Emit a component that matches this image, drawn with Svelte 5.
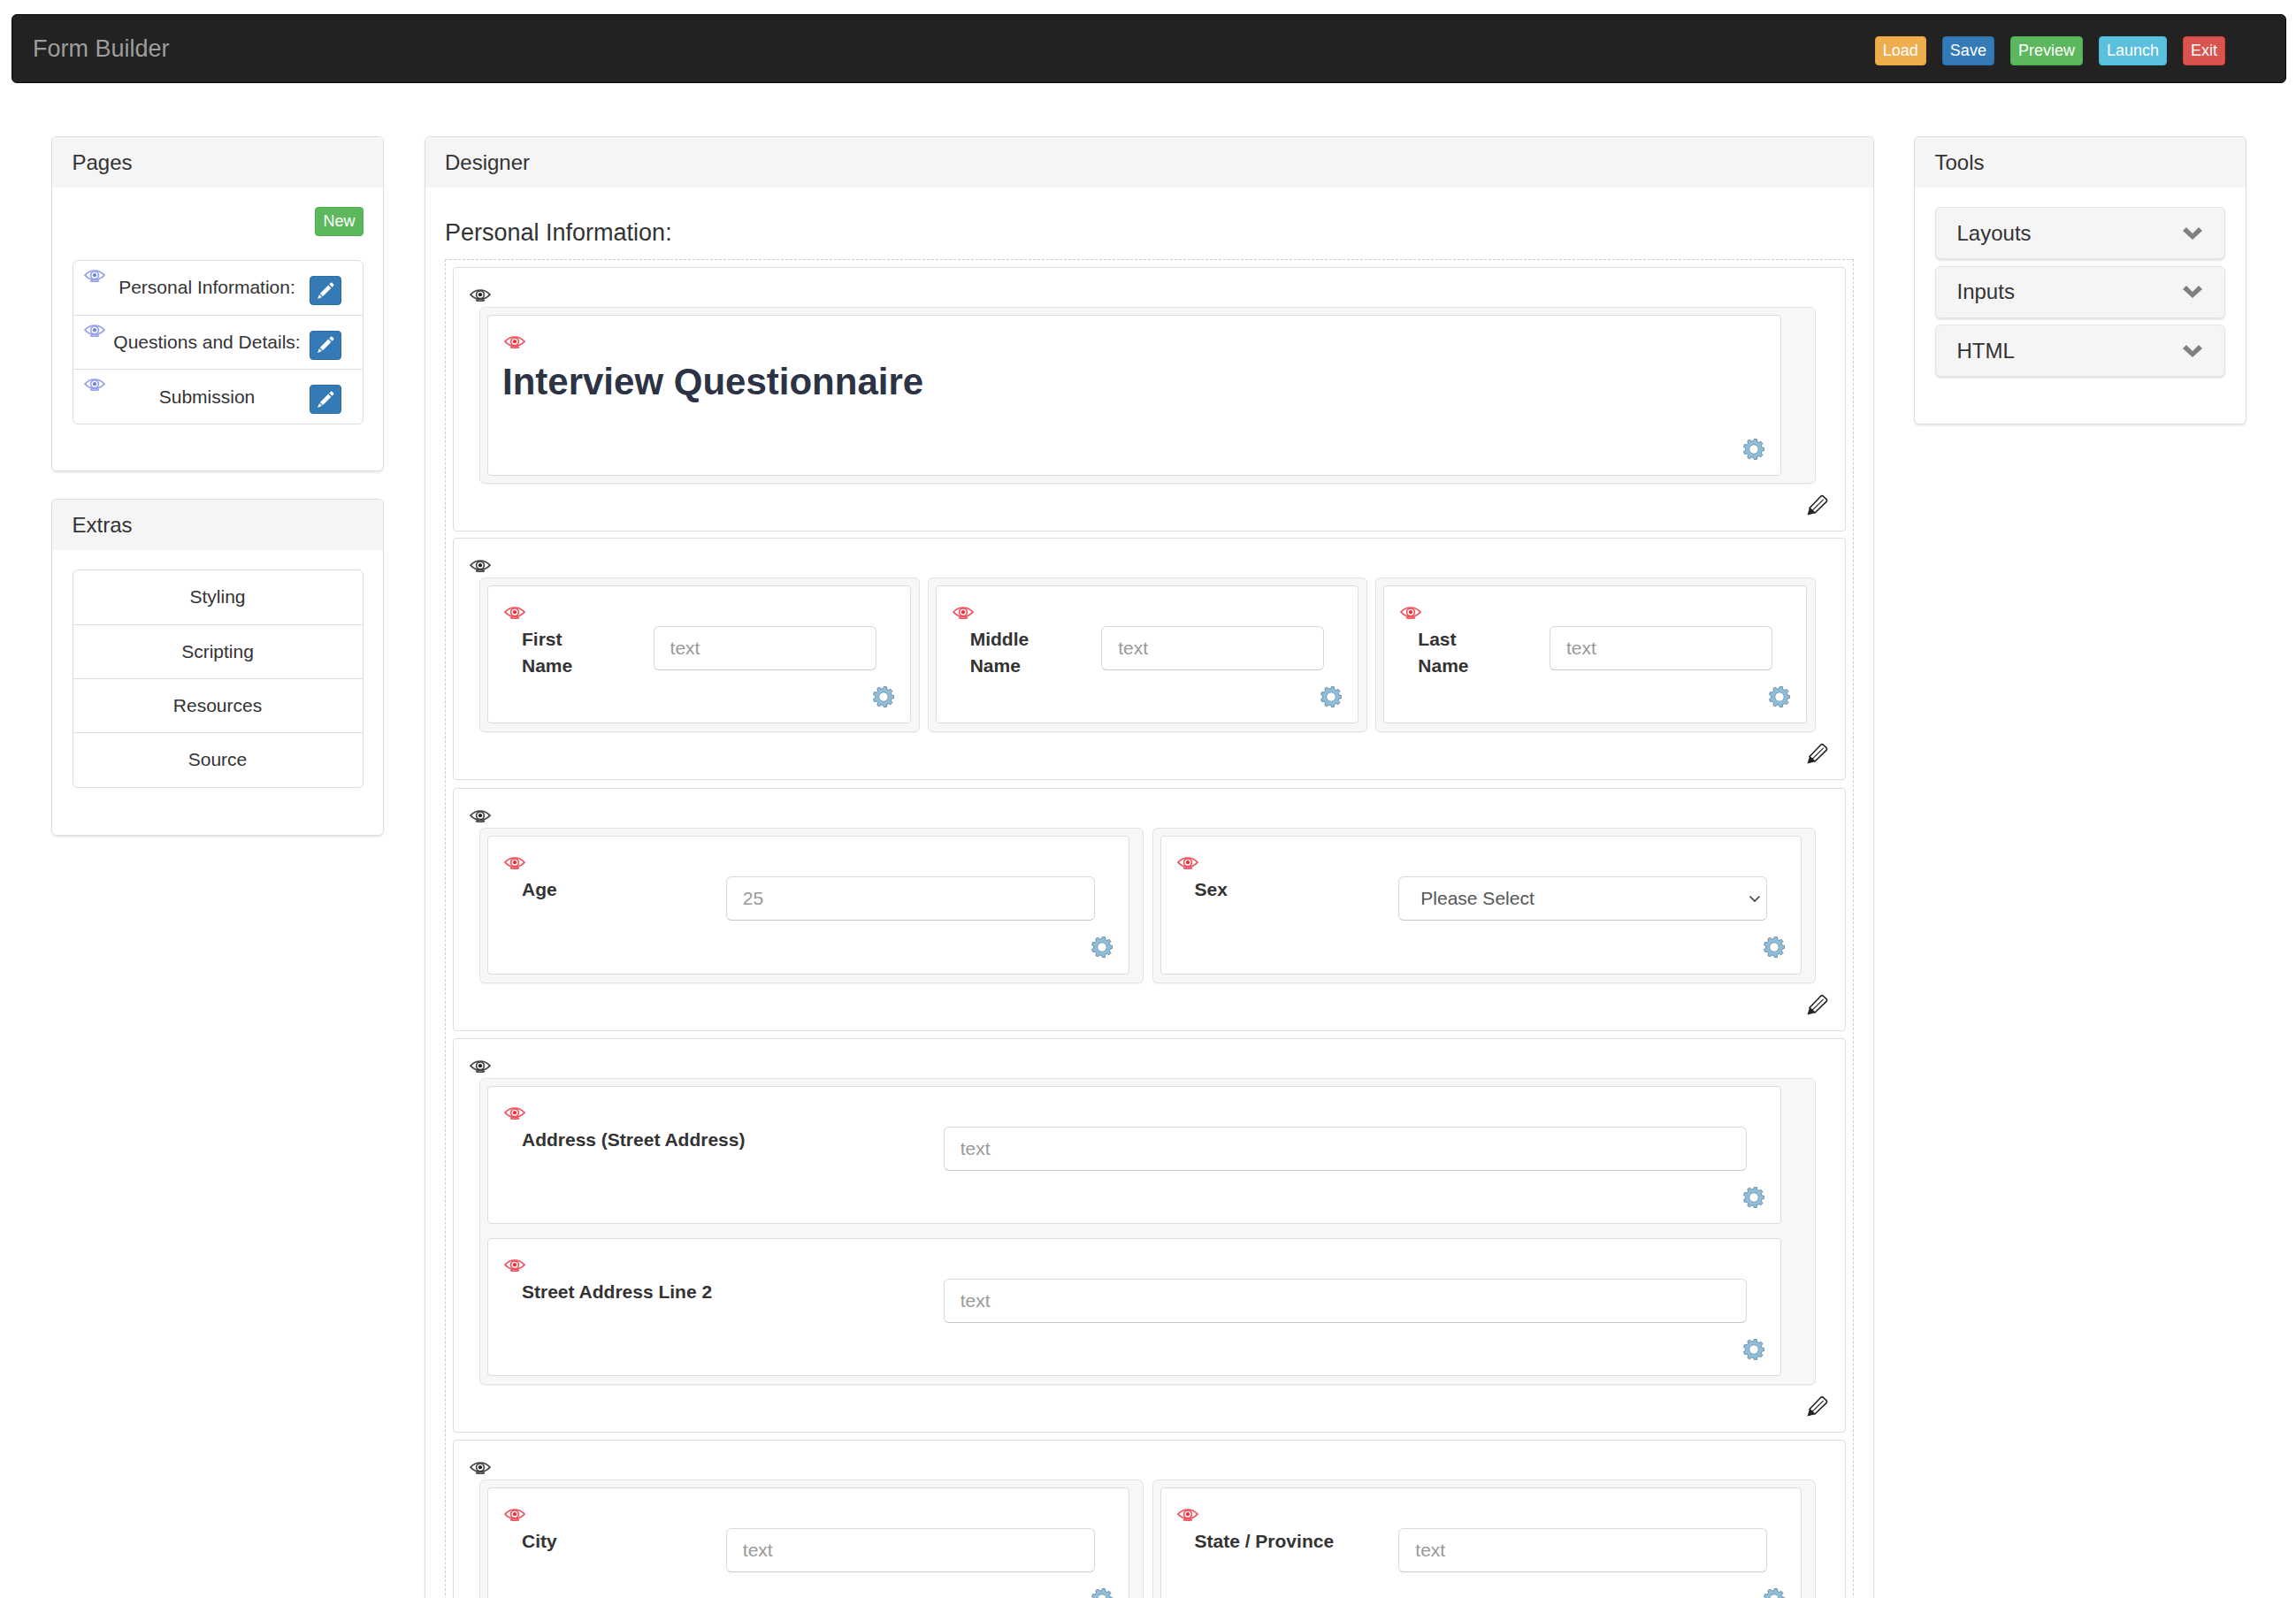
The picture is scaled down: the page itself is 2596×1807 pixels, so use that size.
<script>
  const pages = ['Personal Information:', 'Questions and Details:', 'Submission'];
  const extras = ['Styling', 'Scripting', 'Resources', 'Source'];
  const tools = ['Layouts', 'Inputs', 'HTML'];
  const actions = [
    { label: 'Load', tone: 'warning' },
    { label: 'Save', tone: 'primary' },
    { label: 'Preview', tone: 'success' },
    { label: 'Launch', tone: 'info' },
    { label: 'Exit', tone: 'danger' }
  ];
  const sections = [
    { kind: 'stack', groups: [{ heading: 'Interview Questionnaire' }] },
    { kind: 'three', groups: [
      { label: 'First Name', placeholder: 'text' },
      { label: 'Middle Name', placeholder: 'text' },
      { label: 'Last Name', placeholder: 'text' }
    ] },
    { kind: 'two', groups: [
      { label: 'Age', placeholder: '25' },
      { label: 'Sex', select: 'Please Select' }
    ] },
    { kind: 'stack', groups: [
      { label: 'Address (Street Address)', placeholder: 'text' },
      { label: 'Street Address Line 2', placeholder: 'text' }
    ] },
    { kind: 'two', groups: [
      { label: 'City', placeholder: 'text' },
      { label: 'State / Province', placeholder: 'text' }
    ] }
  ];

  function gearPath() {
    const teeth = 9, cx = 12, cy = 12, ro = 11.8, ri = 9.4;
    let d = '';
    for (let i = 0; i < teeth; i++) {
      const a = (i / teeth) * Math.PI * 2;
      const w = Math.PI / teeth;
      const pts = [
        [ri, a - w * 0.62], [ro, a - w * 0.36], [ro, a + w * 0.36], [ri, a + w * 0.62]
      ];
      for (const [r, t] of pts) {
        d += (d ? 'L' : 'M') + (cx + r * Math.cos(t)).toFixed(2) + ' ' + (cy + r * Math.sin(t)).toFixed(2);
      }
    }
    return d + 'Z';
  }
  const gear = gearPath();
</script>

{#snippet eye(tone)}
  <svg class="eye {tone}" viewBox="0 0 24 14" aria-hidden="true">
    <path class="line" d="M1 6.2C4.5 2.4 8 1 12 1s7.5 1.4 11 5.2C19.5 10 16 11.4 12 11.4S4.5 10 1 6.2Z" />
    <circle class="line" cx="12" cy="6.2" r="4.4" />
    <circle class="dot" cx="12" cy="6.2" r="2.1" />
    <path class="line" d="M7 12.4c3 1.2 7 1.2 10 0" />
  </svg>
{/snippet}

{#snippet cog()}
  <svg class="gear" viewBox="0 0 24 24" aria-hidden="true">
    <path d={gear} fill="#8fbedb" stroke="#6d8da6" stroke-width="1" stroke-linejoin="round" />
    <circle cx="12" cy="12" r="5.2" fill="#fff" stroke="#6d8da6" stroke-width=".8" />
  </svg>
{/snippet}

<div class="page">
  <nav class="navbar">
    <span class="brand">Form Builder</span>
    <div class="actions">
      {#each actions as a}
        <button class="xs {a.tone}">{a.label}</button>
      {/each}
    </div>
  </nav>

  <main class="columns">
    <div class="side">
      <section class="panel">
        <h3 class="head">Pages</h3>
        <div class="body">
          <div class="new-row"><button class="xs success">New</button></div>
          <ul class="list">
            {#each pages as p}
              <li class="item page-item">
                <span class="item-eye">{@render eye('blue')}</span>
                <span class="item-text">{p}</span>
                <button class="edit" aria-label="Edit">
                  <svg viewBox="0 0 20 20" aria-hidden="true">
                    <path d="M13.2 3.6l3.2 3.2L7 16.2 3.8 13z" fill="#fff" />
                    <path d="M14.3 2.5l1.7-1.7q.7-.6 1.4 0l1.8 1.8q.6.7 0 1.4l-1.7 1.7zM3 14l3 3-5 2z" fill="#fff" />
                  </svg>
                </button>
              </li>
            {/each}
          </ul>
        </div>
      </section>

      <section class="panel extras">
        <h3 class="head">Extras</h3>
        <div class="body">
          <ul class="list">
            {#each extras as e}
              <li class="item extra-item">{e}</li>
            {/each}
          </ul>
        </div>
      </section>
    </div>

    <section class="panel designer">
      <h3 class="head">Designer</h3>
      <div class="body">
        <h4 class="page-title">Personal Information:</h4>
        <div class="dropzone">
          {#each sections as s}
            <div class="block" class:title-block={s.groups[0].heading}>
              <span class="block-eye">{@render eye('dark')}</span>
              <div class="wells {s.kind}">
                {#each (s.kind === 'stack' ? [s.groups] : s.groups.map((g) => [g])) as well}
                  <div class="well">
                    {#each well as g}
                      <div class="field" class:title-field={g.heading}>
                        {@render eye('red')}
                        {#if g.heading}
                          <h2 class="heading">{g.heading}</h2>
                        {:else}
                          <div class="field-row">
                            <span class="label">{g.label}</span>
                            {#if g.select}
                              <div class="select-wrap">
                                <select class="control"><option>{g.select}</option></select>
                                <svg class="caret" viewBox="0 0 14 9" aria-hidden="true">
                                  <path d="M1.5 1.5 7 7l5.5-5.5" fill="none" stroke="#444" stroke-width="1.6" />
                                </svg>
                              </div>
                            {:else}
                              <input class="control" placeholder={g.placeholder} />
                            {/if}
                          </div>
                        {/if}
                        <div class="gear-row">{@render cog()}</div>
                      </div>
                    {/each}
                  </div>
                {/each}
              </div>
              <div class="pencil-row">
                <svg class="pencil" viewBox="0 0 24 24" aria-hidden="true">
                  <path d="M3 15.5 15.5 2.5Q17 1 18.5 2.2L22 5.6Q23.2 7 22 8.4L9 21Z" fill="#fff" stroke="#222" stroke-width="1.6" stroke-linejoin="round" />
                  <path d="M6.2 18.2 18.6 5.8" fill="none" stroke="#222" stroke-width="1.2" />
                  <path d="M3 15.3 9.2 21.2.5 23.5Z" fill="#222" />
                </svg>
              </div>
            </div>
          {/each}
        </div>
      </div>
    </section>

    <section class="panel tools">
      <h3 class="head">Tools</h3>
      <div class="body">
        <div class="accordion">
          {#each tools as t}
            <div class="tool">
              <span>{t}</span>
              <svg class="chev" viewBox="0 0 22 14" aria-hidden="true">
                <path d="M0 4 4 0l7 7 7-7 4 4-11 10Z" fill="#808080" />
              </svg>
            </div>
          {/each}
        </div>
      </div>
    </section>
  </main>
</div>

<style>
  :global(html), :global(body) {
    margin: 0;
    background: #fff;
  }
  .page {
    height: 1807px;
    overflow: hidden;
    box-sizing: border-box;
    padding-top: 16px;
    font-family: "Liberation Sans", Arial, sans-serif;
    font-size: 21px;
    line-height: 30px;
    color: #333;
  }
  .navbar {
    margin: 0 11px 0 13px;
    height: 78px;
    box-sizing: border-box;
    display: flex;
    align-items: center;
    justify-content: space-between;
    padding: 0 68px 0 23px;
    background: #222;
    border: 1px solid #080808;
    border-radius: 6px;
  }
  .brand {
    color: #9d9d9d;
    font-size: 27px;
    line-height: 38px;
  }
  .actions {
    display: flex;
    gap: 18px;
    margin-top: 4px;
  }
  button {
    font-family: inherit;
    cursor: pointer;
  }
  .xs {
    height: 33px;
    padding: 0 8px;
    font-size: 18px;
    line-height: 27px;
    color: #fff;
    border: 1px solid transparent;
    border-radius: 4px;
  }
  .warning { background: #f0ad4e; border-color: #eea236; }
  .primary { background: #337ab7; border-color: #2e6da4; }
  .success { background: #5cb85c; border-color: #4cae4c; }
  .info { background: #5bc0de; border-color: #46b8da; }
  .danger { background: #d9534f; border-color: #d43f3a; }

  .columns {
    margin-top: 60px;
    padding-left: 58px;
    display: grid;
    grid-template-columns: 376px 1639.5px 375px;
    column-gap: 45.5px;
    align-items: start;
  }
  .tools { margin-left: -.5px; }
  .panel {
    background: #fff;
    border: 1px solid #ddd;
    border-radius: 6px;
    box-shadow: 0 1.5px 2px rgba(0, 0, 0, .07);
    box-sizing: border-box;
  }
  .head {
    margin: 0;
    padding: 14px 22.5px;
    height: 57px;
    box-sizing: border-box;
    background: #f5f5f5;
    font-size: 24px;
    font-weight: 400;
    line-height: 29px;
    color: #333;
    border-radius: 5px 5px 0 0;
  }
  .body {
    padding: 22px 22.5px 0;
  }
  .side {
    display: flex;
    flex-direction: column;
    gap: 30.5px;
  }
  .side .panel:first-child { height: 379px; }
  .extras { height: 381.5px; }
  .new-row {
    display: flex;
    justify-content: flex-end;
    margin-bottom: 27px;
  }
  .list {
    list-style: none;
    margin: 0;
    padding: 0;
    border: 1px solid #ddd;
    border-radius: 6px;
  }
  .item + .item { border-top: 1px solid #ddd; }
  .page-item {
    position: relative;
    height: 60.67px;
    display: flex;
    align-items: center;
    justify-content: center;
    padding-right: 24px;
  }
  .item-eye {
    position: absolute;
    left: 12px;
    top: 10px;
    line-height: 0;
  }
  .item-text {
    white-space: nowrap;
  }
  .edit {
    position: absolute;
    right: 24px;
    top: 17px;
    width: 36px;
    height: 33px;
    padding: 0;
    display: flex;
    align-items: center;
    justify-content: center;
    background: #337ab7;
    border: 1px solid #2e6da4;
    border-radius: 4px;
  }
  .edit svg { width: 20px; height: 20px; }
  .extra-item {
    height: 61.25px;
    box-sizing: border-box;
    padding-top: 15px;
    text-align: center;
  }
  .tools { height: 326px; }
  .accordion {
    display: flex;
    flex-direction: column;
    gap: 7.5px;
  }
  .tool {
    height: 59px;
    box-sizing: border-box;
    display: flex;
    align-items: center;
    justify-content: space-between;
    padding: 0 25px 0 24px;
    background: #f5f5f5;
    border: 1px solid #e3e3e3;
    border-radius: 6px;
    box-shadow: 0 1.5px 2px rgba(0, 0, 0, .1);
    font-size: 24px;
  }
  .chev { width: 22px; height: 14px; }

  .designer { min-height: 1800px; }
  .page-title {
    margin: 10px 0 11px;
    font-size: 27px;
    font-weight: 400;
    line-height: 38px;
    color: #333;
  }
  .dropzone {
    width: 1593px;
    box-sizing: border-box;
    border: 1px dashed #ccc;
    padding: 8px 8px 0;
    display: flex;
    flex-direction: column;
    gap: 8.25px;
  }
  .block {
    border: 1px solid #ddd;
    border-radius: 4px;
    padding: 24px 33px 0 29px;
  }
  .title-block { margin-bottom: -1px; }
  .block-eye {
    display: block;
    height: 14px;
    margin: 0 0 6px -11px;
    line-height: 0;
  }
  .eye {
    width: 24px;
    height: 14px;
    display: block;
  }
  .eye .line { fill: none; stroke-width: 1.7; }
  .eye.dark .line { stroke: #444; }
  .eye.dark .dot { fill: #222; }
  .eye.red .line { stroke: #f2535e; }
  .eye.red .dot { fill: #ee2b3a; }
  .eye.blue .line { stroke: #95a2e8; }
  .eye.blue .dot { fill: #6f80e0; }

  .wells {
    display: flex;
    gap: 9px;
  }
  .wells.two { gap: 10px; }
  .well {
    flex: 1 1 0;
    min-width: 0;
    box-sizing: border-box;
    background: #f7f7f7;
    border: 1px solid #e3e3e3;
    border-radius: 6px;
    box-shadow: 0 1px 1px rgba(0, 0, 0, .04);
    padding: 8px 9px 9px 8px;
    display: flex;
    flex-direction: column;
    gap: 16px;
  }
  .wells.two .well { padding-right: 15px; }
  .wells.stack .well { padding-right: 38px; }
  .field {
    background: #fff;
    border: 1px solid #ddd;
    border-radius: 4px;
    padding: 23px 18px 17px;
  }
  .wells.two .field { padding-bottom: 18px; }
  .title-field { margin-bottom: -1px; }
  .field-row {
    margin: 8px 20px 0;
    display: grid;
    grid-template-columns: calc((100% + 45px) / 3 - 45px) 1fr;
    column-gap: 45px;
    min-height: 60px;
    align-items: start;
  }
  .label {
    font-weight: 700;
    color: #333;
  }
  .control {
    width: 100%;
    height: 50px;
    box-sizing: border-box;
    padding: 0 18px;
    font-family: inherit;
    font-size: 21px;
    color: #555;
    background: #fff;
    border: 1px solid #d9d9d9;
    border-bottom-color: #c8c8c8;
    border-radius: 6px;
  }
  .control::placeholder { color: #999; opacity: 1; }
  .select-wrap { position: relative; }
  select.control {
    appearance: none;
    padding-left: 24px;
  }
  .caret {
    position: absolute;
    right: 7px;
    top: 21px;
    width: 14px;
    height: 9px;
    pointer-events: none;
  }
  .heading {
    margin: 15px 0 41px -2px;
    font-size: 42px;
    line-height: 46px;
    font-weight: 700;
    color: #2c3345;
  }
  .gear-row {
    display: flex;
    justify-content: flex-end;
    margin-top: 8px;
  }
  .gear { width: 24px; height: 24px; display: block; }
  .pencil-row {
    display: flex;
    justify-content: flex-end;
    height: 53px;
    padding-top: 12px;
    box-sizing: border-box;
    margin-right: -14px;
  }
  .pencil { width: 24px; height: 24px; display: block; }
</style>
